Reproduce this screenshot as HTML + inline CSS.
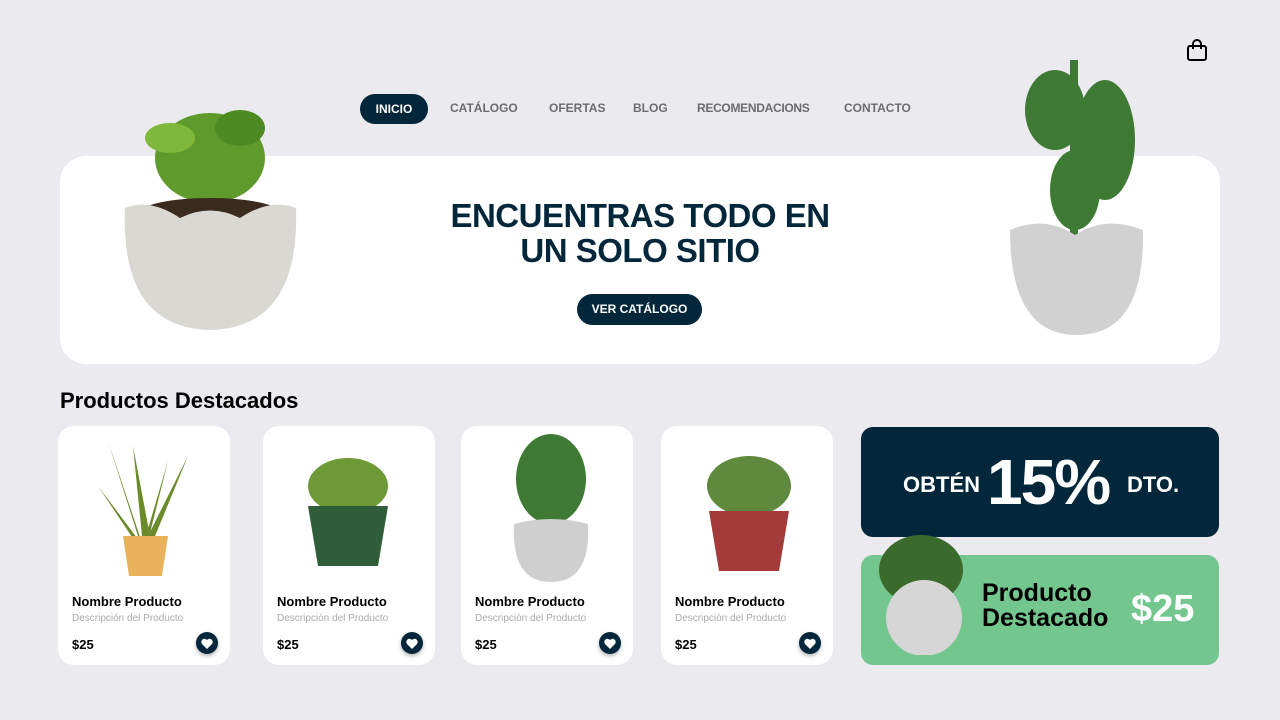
<!DOCTYPE html>
<html><head><meta charset="utf-8"><style>
*{margin:0;padding:0;box-sizing:border-box}
body{width:1280px;height:720px;background:#ebeaef;font-family:"Liberation Sans",sans-serif;position:relative;overflow:hidden}
.a{position:absolute}
.nv{top:101px;font-size:12px;font-weight:bold;color:#6b6b70;white-space:nowrap}
.on{left:360px;top:94px;width:68px;height:30px;background:#02263a;color:#fff;border-radius:15px;font-size:12px;font-weight:bold;text-align:center;line-height:30px}
.banner{left:60px;top:156px;width:1160px;height:208px;background:#fff;border-radius:26px}
h1{position:absolute;left:440px;top:198px;width:400px;text-align:center;font-size:33px;line-height:35px;color:#02263a;font-weight:900;letter-spacing:-0.5px}
.btn{left:577px;top:294px;width:125px;height:31px;background:#02263a;color:#fff;border-radius:16px;font-size:12px;font-weight:bold;text-align:center;line-height:31px}
h2{position:absolute;left:60px;top:388px;font-size:22px;font-weight:bold;color:#000}
.card{width:172px;height:239px;top:426px;background:#fff;border-radius:16px}
.card .n{position:absolute;left:14px;top:168px;font-size:13px;font-weight:bold}
.card .d{position:absolute;left:14px;top:187px;font-size:10px;color:#aaa}
.card .p{position:absolute;left:14px;top:211px;font-size:13px;font-weight:bold}
.card .h{position:absolute;left:138px;top:206px;width:22px;height:22px;border-radius:50%;background:#02263a;box-shadow:0 2px 4px rgba(0,0,0,.3)}
.card .h svg{position:absolute;left:5px;top:6px}
.promo{left:861px;top:427px;width:358px;height:110px;background:#02263a;border-radius:12px;color:#fff;font-weight:900}
.green{left:861px;top:555px;width:358px;height:110px;background:#74c68f;border-radius:12px;font-weight:bold}
</style></head><body>
<svg class="a" style="left:1186px;top:38px" width="22" height="24" viewBox="0 0 22 24"><rect x="2" y="8" width="18" height="14" rx="2" fill="none" stroke="#000" stroke-width="2"/><path d="M7 11V6a4 4 0 0 1 8 0v5" fill="none" stroke="#000" stroke-width="2"/></svg>
<div class="a on">INICIO</div>
<div class="a nv" style="left:450px">CATÁLOGO</div>
<div class="a nv" style="left:549px">OFERTAS</div>
<div class="a nv" style="left:633px">BLOG</div>
<div class="a nv" style="left:697px;letter-spacing:-0.3px">RECOMENDACIONS</div>
<div class="a nv" style="left:844px">CONTACTO</div>
<div class="a banner"></div>
<h1>ENCUENTRAS TODO EN UN SOLO SITIO</h1>
<div class="a btn">VER CATÁLOGO</div>
<svg class="a" style="left:120px;top:98px" width="180" height="235"><g fill="#5e9a2c"><ellipse cx="90" cy="60" rx="55" ry="45"/><ellipse cx="50" cy="40" rx="25" ry="15" fill="#7fb83a"/><ellipse cx="120" cy="30" rx="25" ry="18" fill="#4d8a22"/></g><ellipse cx="90" cy="115" rx="70" ry="15" fill="#3b2a1e"/><path d="M5 110 Q30 100 60 120 Q90 105 120 120 Q150 100 176 110 Q180 230 90 232 Q0 230 5 110Z" fill="#d9d8d3"/></svg>
<svg class="a" style="left:1005px;top:50px" width="160" height="285"><g fill="#3f7a35"><rect x="65" y="10" width="8" height="180"/><ellipse cx="50" cy="60" rx="30" ry="40"/><ellipse cx="100" cy="90" rx="30" ry="60"/><ellipse cx="70" cy="140" rx="25" ry="40"/></g><path d="M5 180 Q40 165 70 185 Q100 165 138 180 Q140 285 72 285 Q5 285 5 180Z" fill="#d1d1d1"/></svg>
<h2>Productos Destacados</h2>
<div class="a card" style="left:58px"><svg class="a" style="left:30px;top:10px" width="110" height="145"><g fill="#6b8a2a"><path d="M55 110 L20 5 L50 100Z"/><path d="M55 110 L45 10 L62 100Z"/><path d="M55 110 L100 20 L65 105Z"/><path d="M55 110 L80 25 L60 105Z"/><path d="M55 110 L10 50 L50 110Z"/></g><path d="M35 100 H80 L74 140 H41Z" fill="#e8b35a"/></svg><div class="n">Nombre Producto</div><div class="d">Descripción del Producto</div><div class="p">$25</div><div class="h"><svg width="12" height="11" viewBox="0 0 12 11"><path d="M6 11L1 6A3 3 0 0 1 6 2A3 3 0 0 1 11 6Z" fill="#fff"/></svg></div></div>
<div class="a card" style="left:263px"><svg class="a" style="left:40px;top:30px" width="90" height="115"><ellipse cx="45" cy="30" rx="40" ry="28" fill="#6d9a36"/><path d="M5 50 H85 L75 110 H15Z" fill="#2f5d3a"/></svg><div class="n">Nombre Producto</div><div class="d">Descripción del Producto</div><div class="p">$25</div><div class="h"><svg width="12" height="11" viewBox="0 0 12 11"><path d="M6 11L1 6A3 3 0 0 1 6 2A3 3 0 0 1 11 6Z" fill="#fff"/></svg></div></div>
<div class="a card" style="left:461px"><svg class="a" style="left:45px;top:8px" width="90" height="150"><ellipse cx="45" cy="45" rx="35" ry="45" fill="#3f7a35"/><path d="M8 90 Q45 80 82 90 Q85 148 45 148 Q5 148 8 90Z" fill="#cfcfcf"/></svg><div class="n">Nombre Producto</div><div class="d">Descripción del Producto</div><div class="p">$25</div><div class="h"><svg width="12" height="11" viewBox="0 0 12 11"><path d="M6 11L1 6A3 3 0 0 1 6 2A3 3 0 0 1 11 6Z" fill="#fff"/></svg></div></div>
<div class="a card" style="left:661px"><svg class="a" style="left:40px;top:25px" width="95" height="125"><ellipse cx="48" cy="35" rx="42" ry="30" fill="#5f8a3e"/><path d="M8 60 H88 L78 120 H18Z" fill="#a33b3b"/></svg><div class="n">Nombre Producto</div><div class="d">Descripción del Producto</div><div class="p">$25</div><div class="h"><svg width="12" height="11" viewBox="0 0 12 11"><path d="M6 11L1 6A3 3 0 0 1 6 2A3 3 0 0 1 11 6Z" fill="#fff"/></svg></div></div>
<div class="a promo"><span class="a" style="left:42px;top:45px;font-size:22px">OBTÉN</span><span class="a" style="left:126px;top:18px;font-size:64px;letter-spacing:-2px">15%</span><span class="a" style="left:266px;top:45px;font-size:22px">DTO.</span></div>
<div class="a green"><svg class="a" style="left:15px;top:-25px" width="90" height="125"><ellipse cx="45" cy="40" rx="42" ry="35" fill="#3a6b2c"/><circle cx="48" cy="88" r="38" fill="#d6d6d6"/></svg><div class="a" style="left:121px;top:26px;font-size:25px;line-height:25px">Producto<br>Destacado</div><div class="a" style="left:270px;top:33px;font-size:38px;color:#fff;font-weight:900">$25</div></div>
</body></html>
